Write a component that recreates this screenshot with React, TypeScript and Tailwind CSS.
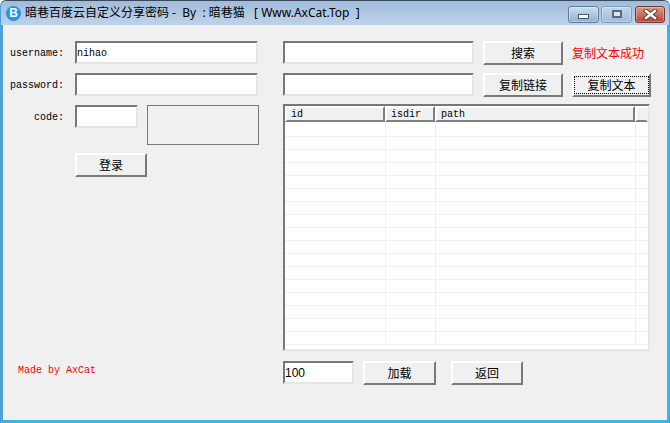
import React from "react";

const cjk = '"Noto Sans CJK SC", "Liberation Sans", sans-serif';
const title = '"Noto Sans", "Noto Sans CJK SC", sans-serif';

function Input({ className = "", value = "", mono = false }: { className?: string; value?: string; mono?: boolean }) {
  return (
    <div
      className={`box-border h-[23px] border-2 border-t-[#787878] border-l-[#787878] border-b-[#e6e6e6] border-r-[#e6e6e6] bg-white flex items-center overflow-hidden ${mono ? "pt-[1px] text-[10px] font-['Liberation_Mono',monospace]" : "text-[12px] font-['Liberation_Sans',sans-serif]"} text-black ${className}`}
    >
      {value}
    </div>
  );
}

function Btn({ label, className = "", focus = false }: { label: string; className?: string; focus?: boolean }) {
  return (
    <div
      className={`box-border h-[24px] border-2 border-t-white border-l-white border-b-[#787878] border-r-[#787878] bg-[#f0f0f0] flex items-center justify-center text-[12px] text-black shrink-0 relative ${className}`}
      style={{ fontFamily: cjk }}
    >
      {focus && <div className="absolute inset-x-0 inset-y-[1px] border border-dotted border-black" />}
      <span className="relative">{label}</span>
    </div>
  );
}

function Label({ text }: { text: string }) {
  return (
    <div className="w-[61px] mr-[11px] h-[23px] pt-[2px] flex items-center justify-end text-[10px] text-black font-['Liberation_Mono',monospace] shrink-0">
      {text}
    </div>
  );
}

function HeadCell({ text, className = "" }: { text: string; className?: string }) {
  return (
    <div className={`box-border h-full border-2 border-t-white border-l-white border-b-[#808080] flex items-center pl-[4px] text-[10px] text-black font-['Liberation_Mono',monospace] ${className}`}>
      {text}
    </div>
  );
}

function WinBtn({ className = "", children }: { className?: string; children: React.ReactNode }) {
  return (
    <div className={`box-border h-[17px] rounded-[3px] border flex items-center justify-center shadow-[inset_0_0_0_1px_rgba(255,255,255,0.3)] ${className}`}>{children}</div>
  );
}

export default function App() {
  const rows = Array.from({ length: 17 });
  return (
    <div className="w-[670px] h-[423px] bg-white overflow-hidden" style={{ fontFamily: cjk }}>
      <div className="box-border w-[670px] h-[423px] rounded-t-[6px] border border-[#3a4a5a] border-b-[#39b8e6] border-r-[#2ab5e6] border-l-[#4f9fd8] bg-[linear-gradient(to_right,#4f9fd8_0%,#39b8e6_2%,#39b8e6_100%)] flex flex-col overflow-hidden">
        <div className="h-[24px] flex items-center shrink-0 bg-gradient-to-b from-[#9fbcdb] to-[#bed3e9]">
          <div className="ml-[5px] w-[15px] h-[15px] rounded-full bg-[#1e96f0] text-white flex items-center justify-center text-[12px] font-bold font-['Liberation_Sans',sans-serif] shrink-0">
            B
          </div>
          <div className="ml-[4px] text-[12px] text-black whitespace-pre flex-1" style={{ fontFamily: title }}>
            暗巷百度云自定义分享密码 -  By  : 暗巷猫   [ Www.AxCat.Top  ]
          </div>
          <div className="flex mr-[4px] mt-[2px]">
            <WinBtn className="w-[31px] mr-[2px] border-[#5f7d9c] bg-gradient-to-b from-[#cfdfee] to-[#8fb0d0]">
              <div className="w-[11px] h-[5px] mt-[5px] bg-white border border-[#44586e]" />
            </WinBtn>
            <WinBtn className="w-[31px] mr-[3px] border-[#7f9cba] bg-gradient-to-b from-[#c4d7ea] to-[#9dbbd9]">
              <div className="w-[10px] h-[8px] border-2 border-[#5a6a7a] bg-[#d8e4f0]" />
            </WinBtn>
            <WinBtn className="w-[30px] border-[#6e3a36] bg-gradient-to-b from-[#dc9a8e] to-[#b93f30]">
              <svg width="15" height="11" viewBox="0 0 15 11">
                <path d="M3 2 L12 9 M12 2 L3 9" stroke="#46302e" strokeWidth="4.2" strokeLinecap="square" />
                <path d="M3 2 L12 9 M12 2 L3 9" stroke="#ffffff" strokeWidth="2.6" strokeLinecap="square" />
              </svg>
            </WinBtn>
          </div>
        </div>

        <div className="flex-1 mx-[2px] mb-[2px] bg-[#f0f0f0] flex pt-[16px]">
          <div className="w-[280px] shrink-0 flex flex-col">
            <div className="flex">
              <Label text="username:" />
              <Input mono value="nihao" className="w-[183px]" />
            </div>
            <div className="flex mt-[9px]">
              <Label text="password:" />
              <Input className="w-[183px]" />
            </div>
            <div className="flex mt-[9px]">
              <Label text="code:" />
              <Input className="w-[63px]" />
              <div className="box-border ml-[9px] w-[112px] h-[40px] border border-[#787878]" />
            </div>
            <Btn label="登录" className="ml-[72px] mt-[8px] w-[72px]" />
            <div className="ml-[15px] mt-[186px] text-[10px] text-[#ff0000] font-['Liberation_Mono',monospace]">
              Made by AxCat
            </div>
          </div>

          <div className="flex-1 flex flex-col">
            <div className="flex items-start">
              <Input className="w-[191px]" />
              <Btn label="搜索" className="ml-[9px] w-[80px]" />
              <div className="ml-[9px] h-[24px] flex items-center text-[12px] text-[#ff0000]">复制文本成功</div>
            </div>
            <div className="flex items-start mt-[8px]">
              <Input className="w-[191px]" />
              <Btn label="复制链接" className="ml-[9px] w-[80px]" />
              <Btn label="复制文本" focus className="ml-[9px] w-[79px]" />
            </div>
            <div className="box-border mt-[7px] w-[367px] h-[247px] border-2 border-t-[#787878] border-l-[#787878] border-b-[#e6e6e6] border-r-[#e6e6e6] bg-white flex flex-col overflow-hidden">
              <div className="h-[18px] shrink-0 bg-white">
                <div className="h-[16px] flex bg-[#f0f0f0]">
                  <HeadCell text="id" className="w-[100px] border-r-[#808080]" />
                  <HeadCell text="isdir" className="w-[50px] border-r-[#808080]" />
                  <HeadCell text="path" className="w-[200px] border-r-[#808080]" />
                  <HeadCell text="" className="flex-1 border-r-[#f0f0f0]" />
                </div>
              </div>
              {rows.map((_, i) => (
                <div key={i} className="h-[13px] flex shrink-0 box-border border-b border-[#f0f0f0]">
                  <div className="w-[101px] box-border border-r border-[#f0f0f0]" />
                  <div className="w-[50px] box-border border-r border-[#f0f0f0]" />
                  <div className="w-[200px] box-border border-r border-[#f0f0f0]" />
                </div>
              ))}
            </div>
            <div className="flex items-start mt-[10px]">
              <Input value="100" className="w-[71px]" />
              <Btn label="加载" className="ml-[9px] w-[73px]" />
              <Btn label="返回" className="ml-[15px] w-[72px]" />
            </div>
          </div>
        </div>
      </div>
    </div>
  );
}
